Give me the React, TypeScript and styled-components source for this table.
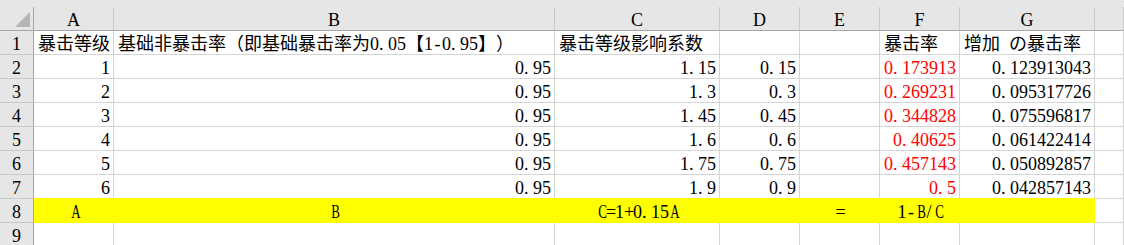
import React from 'react';
import styled, { createGlobalStyle } from 'styled-components';

const GlobalStyle = createGlobalStyle`
  html, body {
    margin: 0;
    padding: 0;
    background: #fff;
  }
  body {
    font-family: "Liberation Serif", "Noto Sans CJK SC", serif;
    font-size: 18px;
    color: #000;
    overflow: hidden;
    text-spacing-trim: space-all;
  }
`;

const HEADER_BG = '#e6e6e6';
const HEADER_EDGE = '#a6a6a6';
const HEADER_SEP = '#c9c9c9';
const GRID = '#d4d4d4';
const FILL = '#ffff00';

const TopStrip = styled.div`
  height: 7px;
  background: ${HEADER_BG};
`;

const Sheet = styled.div`
  display: grid;
  grid-template-columns: 34px 80px 441px 165px 80px 80px 80px 135px 1fr;
  grid-auto-rows: 24px;
`;

const Corner = styled.div`
  background: ${HEADER_BG};
  border-right: 1px solid ${HEADER_EDGE};
  border-bottom: 1px solid ${HEADER_EDGE};
  box-sizing: border-box;
  display: flex;
  align-items: flex-end;
  justify-content: flex-end;
  padding: 0 3px 3px 0;
`;

const ColHead = styled.div`
  background: ${HEADER_BG};
  border-right: 1px solid ${HEADER_SEP};
  border-bottom: 1px solid ${HEADER_EDGE};
  box-sizing: border-box;
  text-align: center;
  padding-top: 2px;
  line-height: 22px;
`;

const RowHead = styled.div`
  background: ${HEADER_BG};
  border-right: 1px solid ${HEADER_EDGE};
  border-bottom: 1px solid ${HEADER_SEP};
  box-sizing: border-box;
  text-align: center;
  padding-top: 2px;
  line-height: 22px;
`;

const Cell = styled.div<{ $align?: 'left' | 'right' | 'center'; $red?: boolean; $fill?: boolean }>`
  border-right: 1px solid ${p => (p.$fill ? FILL : GRID)};
  border-bottom: 1px solid ${p => (p.$fill ? FILL : GRID)};
  box-sizing: border-box;
  background: ${p => (p.$fill ? FILL : '#fff')};
  margin-top: ${p => (p.$fill ? '-1px' : '0')};
  padding: ${p => (p.$fill ? '3px' : '2px')} 3px 0 4px;
  line-height: 22px;
  text-align: ${p => p.$align ?? 'left'};
  color: ${p => (p.$red ? '#ff0000' : '#000')};
  white-space: nowrap;
  overflow: visible;
  position: relative;
  z-index: ${p => (p.$fill ? 1 : 0)};
`;

// SimSun-like half-width slot for latin characters
const Half = styled.span<{ $left?: boolean; $narrow?: boolean }>`
  display: inline-block;
  width: 0.5em;
  text-align: ${p => (p.$left ? 'left' : 'center')};
  transform: ${p => (p.$narrow ? 'scaleX(0.72)' : 'none')};
`;

const Text: React.FC<{ value: string }> = ({ value }) => (
  <>
    {Array.from(value).map((ch, i) =>
      ch.charCodeAt(0) < 128 ? (
        <Half key={i} $left={ch === '.'} $narrow={/[A-Z]/.test(ch)}>
          {ch === ' ' ? '\u00a0' : ch}
        </Half>
      ) : (
        ch
      )
    )}
  </>
);

const cols = ['A', 'B', 'C', 'D', 'E', 'F', 'G', ''];

const head = ['暴击等级', '基础非暴击率（即基础暴击率为0.05【1-0.95】）', '暴击等级影响系数', '', '', '暴击率', '增加 の暴击率', ''];

const data: string[][] = [
  ['1', '0.95', '1.15', '0.15', '', '0.173913', '0.123913043', ''],
  ['2', '0.95', '1.3', '0.3', '', '0.269231', '0.095317726', ''],
  ['3', '0.95', '1.45', '0.45', '', '0.344828', '0.075596817', ''],
  ['4', '0.95', '1.6', '0.6', '', '0.40625', '0.061422414', ''],
  ['5', '0.95', '1.75', '0.75', '', '0.457143', '0.050892857', ''],
  ['6', '0.95', '1.9', '0.9', '', '0.5', '0.042857143', ''],
];

const legend = ['A', 'B', 'C=1+0.15A', '', '=', '1-B/C', '', ''];

export default function App() {
  return (
    <>
      <GlobalStyle />
      <TopStrip />
      <Sheet>
        <Corner>
          <svg width="15" height="15" viewBox="0 0 15 15">
            <polygon points="15,0 15,15 0,15" fill="#b5b5b5" />
          </svg>
        </Corner>
        {cols.map((c, i) => (
          <ColHead key={i}>{c}</ColHead>
        ))}

        <RowHead>1</RowHead>
        {head.map((v, i) => (
          <Cell key={i}>
            <Text value={v} />
          </Cell>
        ))}

        {data.map((row, r) => (
          <React.Fragment key={r}>
            <RowHead>{r + 2}</RowHead>
            {row.map((v, i) => (
              <Cell key={i} $align="right" $red={i === 5}>
                <Text value={v} />
              </Cell>
            ))}
          </React.Fragment>
        ))}

        <RowHead>8</RowHead>
        {legend.map((v, i) => (
          <Cell key={i} $align="center" $fill={i < 7}>
            <Text value={v} />
          </Cell>
        ))}

        <RowHead>9</RowHead>
        {cols.map((_, i) => (
          <Cell key={i} />
        ))}
      </Sheet>
    </>
  );
}
